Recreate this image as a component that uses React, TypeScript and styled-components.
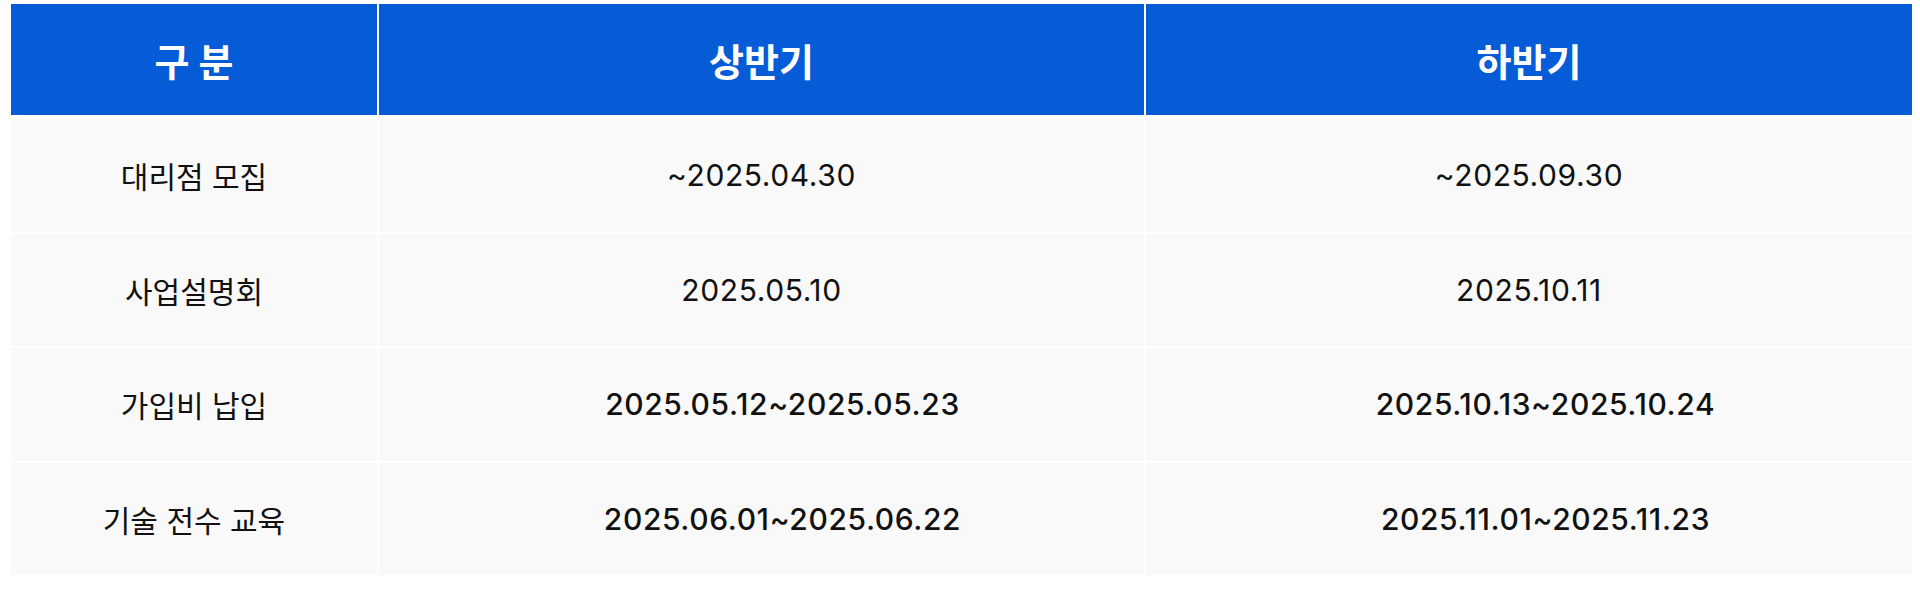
import styled, { createGlobalStyle } from "styled-components";

const GlobalStyle = createGlobalStyle`
  body {
    margin: 0;
    background: #ffffff;
    font-family: Inter, "Noto Sans CJK KR", sans-serif;
  }
`;

const StyledPage = styled.div`
  padding: 4px 8px 0 11px;
`;

const StyledTable = styled.div`
  display: flex;
  flex-direction: column;
  gap: 2px;
`;

const StyledRow = styled.div<{ $head?: boolean }>`
  display: grid;
  grid-template-columns: 366px 765px 1fr;
  gap: 2px;
  height: ${(p) => (p.$head ? "110.5px" : "112.5px")};
  margin-bottom: ${(p) => (p.$head ? "2.5px" : "0")};
`;

const StyledCell = styled.div<{ $head?: boolean; $shift?: number }>`
  display: flex;
  align-items: center;
  justify-content: center;
  padding-left: ${(p) => p.$shift ?? 0}px;
  background: ${(p) => (p.$head ? "#065bd7" : "#f9f9f9")};
  color: ${(p) => (p.$head ? "#ffffff" : "#111111")};
  font-size: ${(p) => (p.$head ? "38px" : "30px")};
  font-weight: ${(p) => (p.$head ? 700 : 400)};
`;

const StyledDate = styled.span<{ $strong?: boolean }>`
  font-size: 30px;
  letter-spacing: 0.6px;
  font-weight: ${(p) => (p.$strong ? 500 : 400)};
`;

const rows = [
  { label: "대리점 모집", first: "~2025.04.30", second: "~2025.09.30", strong: false },
  { label: "사업설명회", first: "2025.05.10", second: "2025.10.11", strong: false },
  { label: "가입비 납입", first: "2025.05.12~2025.05.23", second: "2025.10.13~2025.10.24", strong: true },
  { label: "기술 전수 교육", first: "2025.06.01~2025.06.22", second: "2025.11.01~2025.11.23", strong: true },
];

export default function App() {
  return (
    <StyledPage>
      <GlobalStyle />
      <StyledTable>
        <StyledRow $head>
          <StyledCell $head>구 분</StyledCell>
          <StyledCell $head>상반기</StyledCell>
          <StyledCell $head>하반기</StyledCell>
        </StyledRow>
        {rows.map((row) => (
          <StyledRow key={row.label}>
            <StyledCell>{row.label}</StyledCell>
            <StyledCell $shift={row.strong ? 42 : 0}>
              <StyledDate $strong={row.strong}>{row.first}</StyledDate>
            </StyledCell>
            <StyledCell $shift={row.strong ? 33 : 0}>
              <StyledDate $strong={row.strong}>{row.second}</StyledDate>
            </StyledCell>
          </StyledRow>
        ))}
      </StyledTable>
    </StyledPage>
  );
}
